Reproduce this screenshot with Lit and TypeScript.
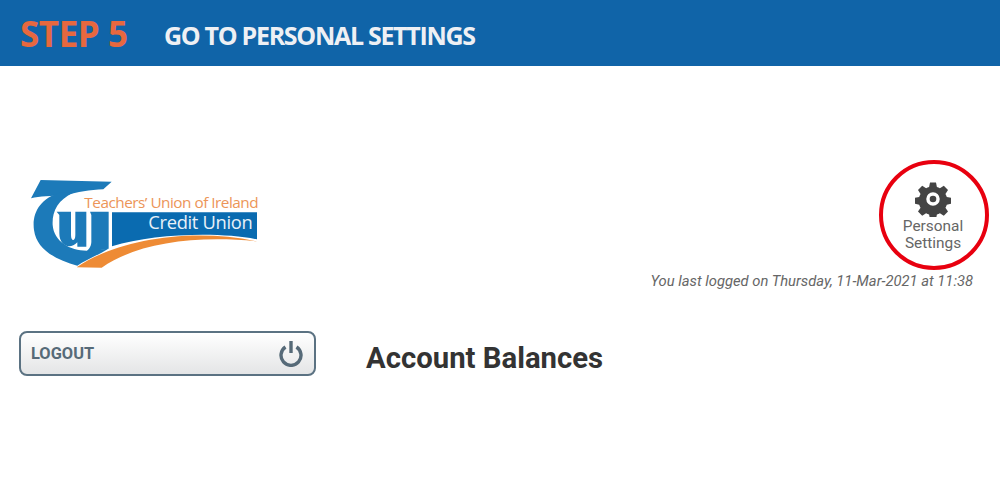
import { LitElement, html, css } from "lit";
import { customElement } from "lit/decorators.js";

@customElement("app-root")
export class AppRoot extends LitElement {
  static styles = css`
    :host { display: block; width: 1000px; height: 500px; background: #fff; overflow: hidden; font-family: Roboto, sans-serif; }
    .banner { height: 66px; background: #1064a8; display: flex; align-items: center; padding-left: 20px; font-family: "Open Sans", sans-serif; font-weight: 700; }
    .step { color: #e7683f; font-size: 35px; width: 144px; white-space: nowrap; letter-spacing: -0.45px; }
    .title { color: #eef0f4; font-size: 25px; font-weight: 700; letter-spacing: -1.3px; white-space: nowrap; padding-top: 3px; }
    .head { display: flex; justify-content: space-between; padding: 104px 27px 0 20px; height: 265px; box-sizing: border-box; }
    .logo { display: block; }
    .right { display: flex; flex-direction: column; align-items: flex-end; padding-top: 11px; }
    .settings { position: relative; width: 80px; display: flex; flex-direction: column; align-items: center; color: #666; font-size: 15.4px; line-height: 17px; text-align: center; }
    .gear { display: block; margin-bottom: 1px; }
    .ring { position: absolute; left: -14px; top: -21px; width: 110px; height: 110px; box-sizing: border-box; border: 4.5px solid #e8000f; border-radius: 50%; }
    .last { font-size: 14.75px; line-height: 17px; font-style: italic; color: #666; margin-top: 21px; white-space: nowrap; }
    .row { display: flex; align-items: center; padding-left: 19px; }
    .logout { width: 297px; height: 45px; box-sizing: border-box; border: 2px solid #5b7282; border-radius: 8px; background: linear-gradient(#fff, #e4e5e6); display: flex; align-items: center; justify-content: space-between; padding: 0 11px 0 10px; color: #566a78; font-family: Roboto, sans-serif; font-weight: 700; font-size: 16.4px; }
    h1 { margin: 8px 0 0 50px; font-size: 29.3px; font-weight: 700; color: #333; }
  `;
  render() {
    return html`
      <div class="banner"><span class="step">STEP 5</span><span class="title">GO TO PERSONAL SETTINGS</span></div>
      <div class="head">
        <svg class="logo" width="250" height="110" viewBox="0 0 750 330">
          <path fill="#1c7ab9" d="M33 85 L62 30 L275 35 L250 58 C210 60 170 66 140 76 C90 78 60 78 33 85Z"/>
          <path fill="#1c7ab9" d="M120 68 C60 85 35 130 42 180 C50 240 110 270 172 287 C195 270 230 258 265 236 L200 242 C150 242 102 215 98 165 C96 125 112 90 160 68Z"/>
          <path fill="#1c7ab9" d="M110 125 H153 V195 C153 215 166 215 166 195 V125 H199 V230 H172 V217 C150 240 118 228 118 190 V135 Z"/>
          <path fill="#1c7ab9" d="M210 125 H266 V236 L195 247 C210 237 214 225 214 215 V135Z"/>
          <path fill="#0a6bb0" d="M276 127 H711 V208 C600 185 400 190 276 229Z"/>
          <path fill="#ee8b35" d="M170 292 C280 215 500 170 711 214 C520 195 350 220 245 293Z"/>
          <text x="193" y="115" font-family="Open Sans, sans-serif" font-size="46" letter-spacing="-1.5" fill="#ec9558">Teachers’ Union of Ireland</text>
          <text x="385" y="178" font-family="Open Sans, sans-serif" font-size="55" letter-spacing="-1" fill="#e8f1f8">Credit Union</text>
        </svg>
        <div class="right">
          <div class="settings">
            <div class="ring"></div>
            <svg class="gear" width="36" height="36" viewBox="0 0 24 24"><path fill="#444" fill-rule="evenodd" d="M10 1 h4 l.6 3 a8 8 0 0 1 2 .9 l2.6-1.7 2.8 2.8-1.7 2.6 a8 8 0 0 1 .9 2 l3 .6 v4 l-3 .6 a8 8 0 0 1-.9 2 l1.7 2.6-2.8 2.8-2.6-1.7 a8 8 0 0 1-2 .9 l-.6 3 h-4 l-.6-3 a8 8 0 0 1-2-.9 l-2.6 1.7-2.8-2.8 1.7-2.6 a8 8 0 0 1-.9-2 l-3-.6 v-4 l3-.6 a8 8 0 0 1 .9-2 L2 6 4.8 3.2 7.4 4.9 a8 8 0 0 1 2-.9Z M12 7.5 a4.5 4.5 0 1 0 0 9 a4.5 4.5 0 1 0 0-9Z"/><circle cx="12" cy="12" r="2.2" fill="#444"/></svg>
            <span>Personal<br />Settings</span>
          </div>
          <div class="last">You last logged on Thursday, 11-Mar-2021 at 11:38</div>
        </div>
      </div>
      <div class="row">
        <div class="logout"><span>LOGOUT</span>
          <svg width="24" height="27" viewBox="0 0 24 27" fill="none" stroke="#566a78" stroke-width="3.4"><path d="M6.5 7 a10 10 0 1 0 11 0"/><path d="M12 1 V13"/></svg>
        </div>
        <h1>Account Balances</h1>
      </div>
    `;
  }
}
